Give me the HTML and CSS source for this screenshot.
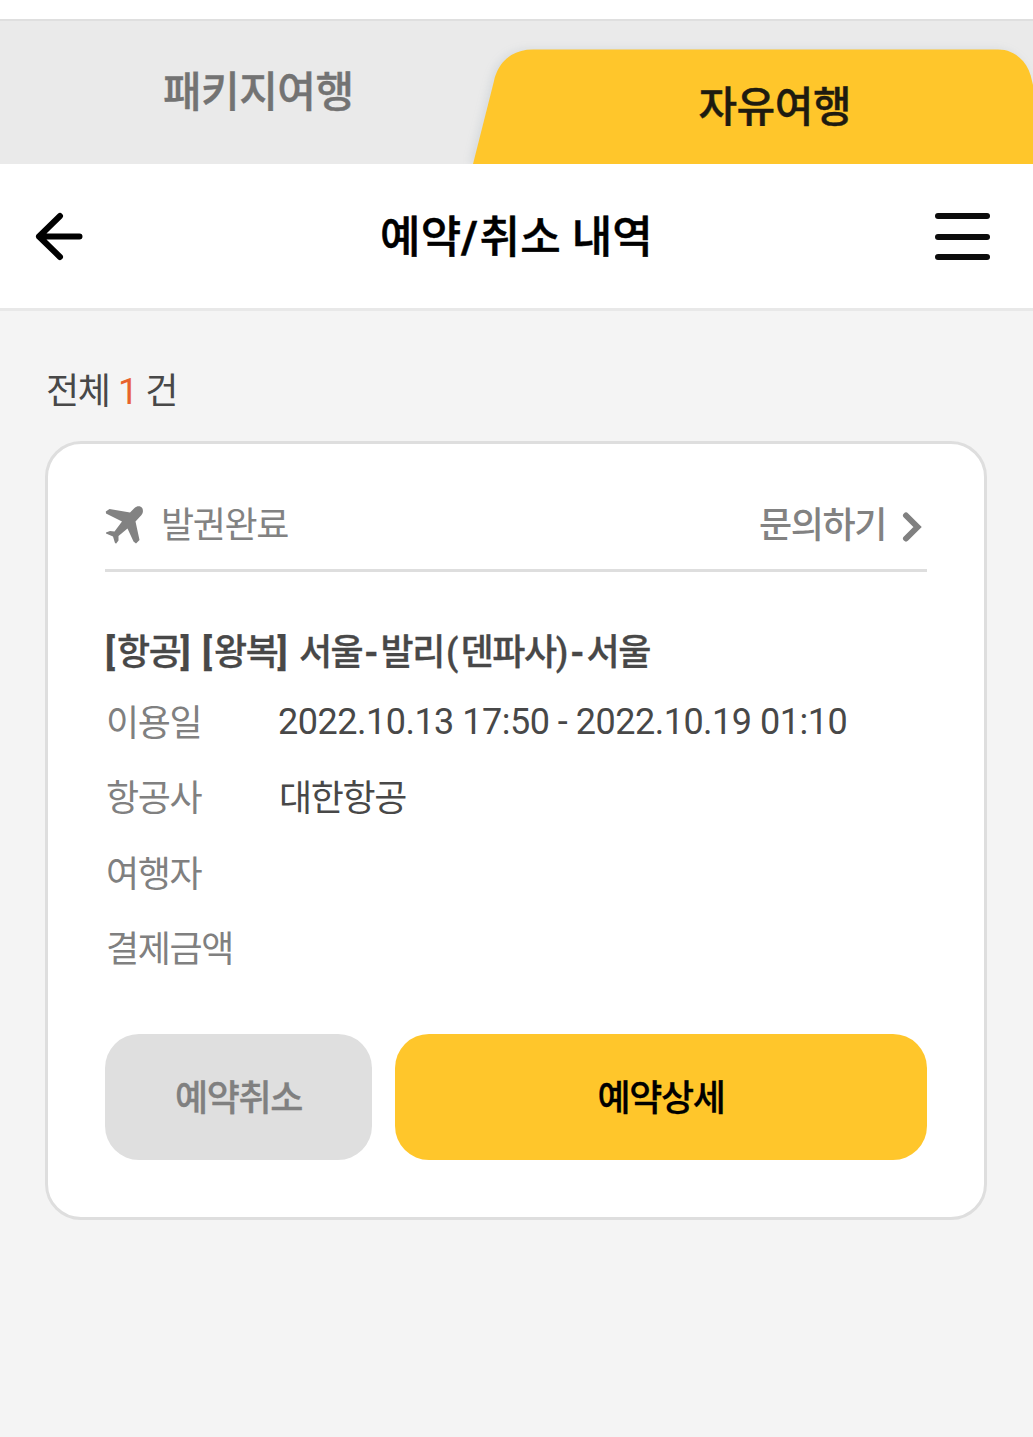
FILE: index.html
```html
<!DOCTYPE html>
<html lang="ko">
<head>
  <meta charset="UTF-8" />
  <meta name="viewport" content="width=device-width, initial-scale=1.0"/>
  <title>예약/취소 내역</title>
  <link rel="stylesheet" href="styles.css">
</head>
<body>

  <nav class="tabs">
    <a class="tab"><span class="tab-text">패키지여행</span></a>
    <a class="tab active">
      <svg class="tab-bg" width="580" height="145" viewBox="0 0 580 145">
        <path d="M20 145 L41 62 C45 44 58 30.500 80 30.500 H545 C563 30.500 576 44 579 62 L580 66 V145 Z" fill="#ffc62b"/>
      </svg>
      <span class="tab-text">자유여행</span>
    </a>
  </nav>

  <header>
    <svg class="back" width="52" height="52" viewBox="0 0 52 52">
      <path d="M27 6 L6 26.500 L27 47 M6 26.500 H46.500" fill="none" stroke="#000" stroke-width="6" stroke-linecap="round" stroke-linejoin="round"/>
    </svg>
    <h1>예약<b>/</b>취소 내역</h1>
    <div class="menu"><i></i><i></i><i></i></div>
  </header>

  <main>
    <p class="total">전체 <em>1</em> 건</p>

    <section class="card">
      <div class="card-top">
        <svg class="plane" width="38" height="38" viewBox="0 0 38 38">
          <path d="M25 6.500 L29.500 2 C32 -.5 35.500 -.5 37.200 2 C38.500 4.500 38 7 36.500 9 L30.500 15.500 L34.500 34 L31 37.500 L28.500 35.500 L22.500 22.500 L13.500 30 L13.500 34.500 L11 37.800 L9.800 36.500 L8 30.500 L1 27.500 L1 26.500 L5 25 L9.500 25.500 L17 15.500 L1 7.500 L.8 5.500 L4.500 3 Z" fill="#828282"/>
        </svg>
        <span class="status">발권완료</span>
        <a class="ask">문의하기
          <svg width="20" height="30" viewBox="0 0 20 30">
            <path d="M4 3.500 L15.500 15 L4 26.500" fill="none" stroke="#808080" stroke-width="6" stroke-linecap="round"/>
          </svg>
        </a>
      </div>

      <h2><b>[</b>항공<b>]</b> <b>[</b>왕복<b>]</b> 서울<b class="dash">-</b>발리<b class="open">(</b>덴파사<b class="close">)</b><b class="dash">-</b>서울</h2>
      <dl>
        <dt>이용일</dt>
        <dd class="date">2022.10.13 17:50 - 2022.10.19 01:10</dd>
        <dt>항공사</dt>
        <dd>대한항공</dd>
        <dt>여행자</dt>
        <dd></dd>
        <dt>결제금액</dt>
        <dd></dd>
      </dl>

      <div class="buttons">
        <button class="cancel">예약취소</button>
        <button class="detail">예약상세</button>
      </div>
    </section>
  </main>

</body>
</html>
```

FILE: styles.css
```css
* {
  box-sizing: border-box;
}
body {
  margin: 0;
  padding-top: 19px;
  min-height: 1437px;
  font-family: Roboto, "Noto Sans CJK KR", sans-serif;
  font-size: 36px;
  letter-spacing: -1.4px;
  background: linear-gradient(#fff 19px, #f4f4f4 19px);
  color: #484848;
}
h1, h2, p, dl, dd {
  margin: 0;
}
svg {
  display: block;
}

/* Tabs */
.tabs {
  display: flex;
  height: 145px;
  border-top: 2px solid #dfdfdf;
  background: #eaeaea;
  overflow: hidden;
}
.tab {
  position: relative;
  width: 50%;
  padding-top: 42px;
  text-align: center;
  color: #737373;
  font-size: 42px;
  line-height: 60px;
  font-weight: 500;
  letter-spacing: -0.5px;
  -webkit-text-stroke: 0.4px;
}
.tab.active {
  padding-top: 57px;
  color: #1e1b10;
}
.tab-text {
  position: relative;
}
.tab-bg {
  position: absolute;
  top: -2px;
  right: 0;
  filter: drop-shadow(-3px 0 4px rgba(90,120,140,0.14));
}

/* Title bar */
header {
  display: flex;
  align-items: center;
  justify-content: space-between;
  height: 147px;
  padding: 2px 43px 2px 33px;
  background: #fff;
  border-bottom: 3px solid #e8e8e8;
}
h1 {
  padding: 4px 0 0 13px;
  color: #000;
  font-size: 44px;
  line-height: 60px;
  font-weight: 500;
  letter-spacing: 0.1px;
  -webkit-text-stroke: 0.5px;
}
h1 b {
  letter-spacing: 2px;
}
.menu {
  display: flex;
  flex-direction: column;
  justify-content: space-between;
  width: 55px;
  height: 47px;
  margin-top: 1px;
}
.menu i {
  height: 6px;
  border-radius: 3px;
  background: #0c0c0c;
}

main {
  padding: 56px 46px 0 45px;
}
.total {
  height: 74px;
  padding-left: 1px;
  line-height: 50px;
  word-spacing: 1px;
}
.total em {
  color: #e8622c;
  font-style: normal;
}

/* Reservation card */
.card {
  height: 779px;
  padding: 50px 57px 0;
  background: #fff;
  border: 3px solid #dedede;
  border-radius: 36px;
}
.card-top {
  display: flex;
  align-items: center;
  height: 78px;
  padding-bottom: 14px;
  border-bottom: 3px solid #dedede;
  color: #828282;
}
.status {
  margin: -6px 0 0 18px;
}
.ask {
  display: flex;
  align-items: center;
  gap: 16px;
  margin: -6px 0 0 auto;
  padding-right: 5px;
  font-weight: 500;
}
.ask svg {
  margin-top: 11px;
}
h2 {
  margin-top: 55px;
  font-size: 36px;
  line-height: 52px;
  font-weight: 500;
  white-space: nowrap;
  word-spacing: 2px;
  -webkit-text-stroke: 0.3px;
}
h2 b {
  font-weight: 700;
  letter-spacing: 2px;
}
h2 .dash {
  margin-left: 2px;
  letter-spacing: 2px;
}
h2 .open {
  margin-left: 2px;
  font-weight: 500;
}
h2 .close {
  font-weight: 500;
  letter-spacing: 0;
}
dl {
  display: grid;
  grid-template-columns: 173px 1fr;
  grid-auto-rows: 75.3px;
  line-height: 75px;
  margin-top: 5px;
}
dt, dd {
  padding-top: 3px;
}
dt {
  padding-left: 1px;
  color: #808080;
}
dd {
  padding-left: 1px;
}
.date {
  padding: 1px 0 0;
  letter-spacing: -0.5px;
  white-space: nowrap;
}

.buttons {
  display: flex;
  gap: 23px;
  margin-top: 49px;
}
.buttons button {
  height: 126px;
  padding-bottom: 6px;
  border: none;
  border-radius: 34px;
  font: inherit;
  font-weight: 500;
  letter-spacing: inherit;
  -webkit-text-stroke: 0.3px;
}
.cancel {
  width: 267px;
  background: #dfdfdf;
  color: #808080;
}
.detail {
  flex: 1;
  background: #ffc62b;
  color: #000;
}
```
